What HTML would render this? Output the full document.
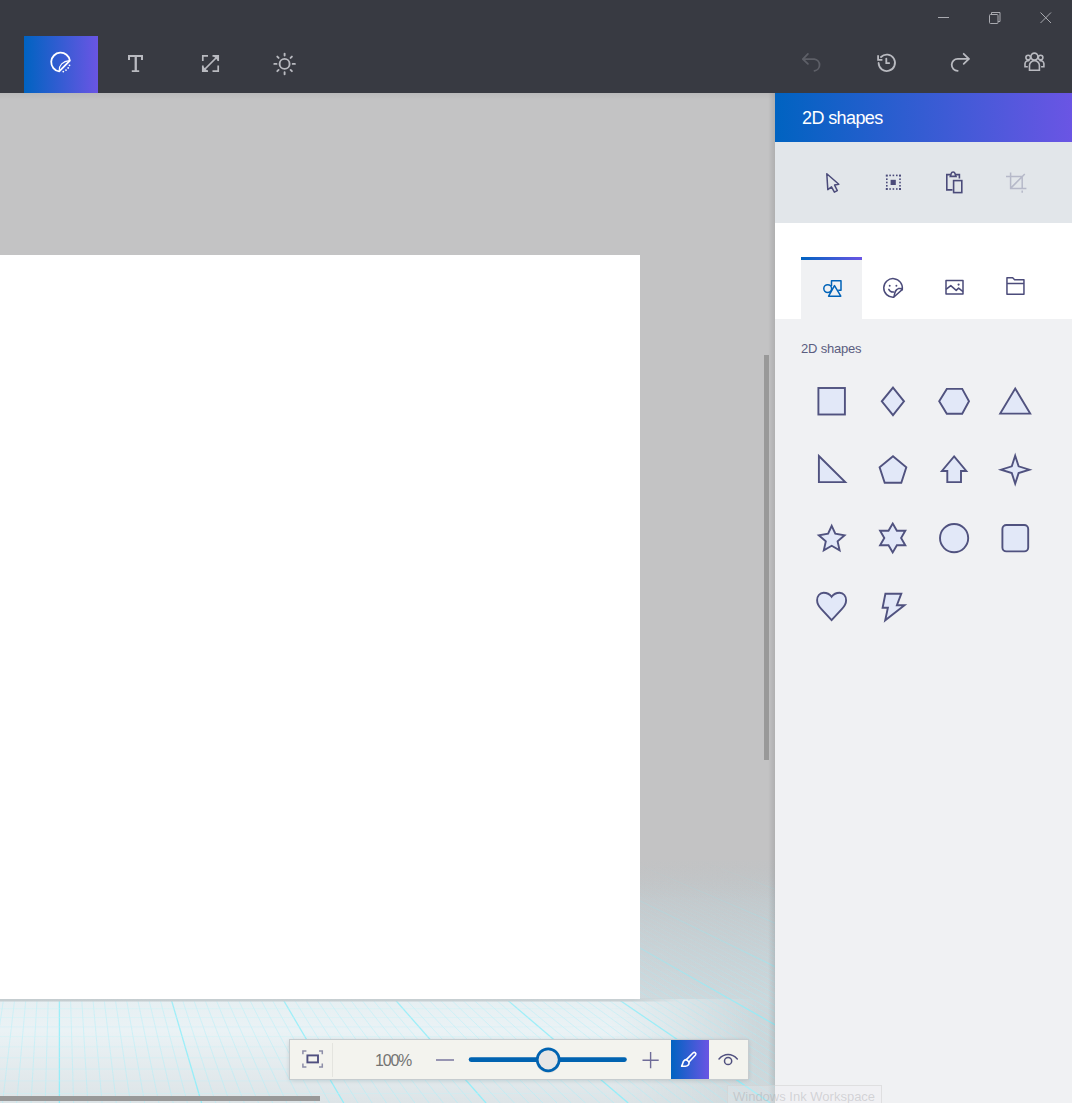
<!DOCTYPE html>
<html><head><meta charset="utf-8">
<style>
*{margin:0;padding:0;box-sizing:border-box}
html,body{width:1072px;height:1103px;overflow:hidden;font-family:"Liberation Sans",sans-serif}
body{position:relative;background:#c3c3c4}
.abs{position:absolute}
#topbar{left:0;top:0;width:1072px;height:93px;background:#383a42}
#activebtn{left:24px;top:36px;width:74px;height:57px;background:linear-gradient(to right,#0063c1,#6a55e4)}
#canvasarea{left:0;top:93px;width:775px;height:1010px;background:#c3c3c4;overflow:hidden}
#paper{left:0;top:255px;width:640px;height:744px;background:#fff}
#panel{left:775px;top:93px;width:297px;height:1010px;background:#f0f1f3}
#phead{left:0;top:0;width:297px;height:49px;background:linear-gradient(to right,#0063c1,#6a55e4)}
#phead span{position:absolute;left:27px;top:14.5px;color:#fff;font-size:18px;letter-spacing:-0.6px;line-height:20px}
#prow{left:0;top:49px;width:297px;height:81px;background:#e2e6ea}
#ptabs{left:0;top:130px;width:297px;height:96px;background:#fff}
#tabsel{left:26px;top:164px;width:61px;height:62px;background:#f0f1f3}
#tabline{left:26px;top:164px;width:61px;height:3px;background:linear-gradient(to right,#0063c1,#6a55e4)}
#lbl{left:801px;top:341px;color:#5b5d80;font-size:13px;letter-spacing:-0.2px;line-height:16px}
#vscroll{left:764px;top:355px;width:5px;height:405px;background:#999}
#hscroll{left:0;top:1096px;width:320px;height:5px;background:#999}
#zoombar{left:290px;top:1040px;width:458px;height:39px;background:#f3f3ee;box-shadow:0 0 0 1px #c6cccf,0 1px 5px rgba(0,0,0,.16)}
#brushbtn{left:671px;top:1040px;width:38px;height:39px;background:linear-gradient(to right,#0063c1,#6a55e4)}
#sep{left:332px;top:1043px;width:1px;height:34px;background:#e4e4df}
#pct{left:375px;top:1052px;color:#737373;font-size:16px;letter-spacing:-1.2px;line-height:18px}
#tooltip{left:727px;top:1085px;width:155px;height:30px;border:1px solid rgba(205,205,205,.5);background:rgba(240,241,243,.25)}
#tooltip span{position:absolute;left:5px;top:3px;font-size:13px;color:rgba(160,160,165,.38);white-space:nowrap;line-height:15px}
#pshadow{left:768px;top:93px;width:7px;height:1010px;background:linear-gradient(to right,rgba(0,0,0,0),rgba(0,0,0,.1))}
</style></head><body>
<div id="topbar" class="abs"></div>
<div id="activebtn" class="abs"></div>
<div id="canvasarea" class="abs">
<svg width="775" height="1010" style="position:absolute;left:0;top:0">
<defs>
<linearGradient id="floorbg" x1="0" y1="0" x2="0" y2="1">
<stop offset="0" stop-color="#c2c3c5" stop-opacity="0"/>
<stop offset="0.165" stop-color="#c5cacd" stop-opacity="1"/>
<stop offset="0.41" stop-color="#cdd6da"/>
<stop offset="0.57" stop-color="#d3dde1"/>
<stop offset="1" stop-color="#d6dfe2"/>
</linearGradient>
<linearGradient id="lightv" x1="0" y1="0" x2="0" y2="1">
<stop offset="0" stop-color="#e6eff2"/>
<stop offset="0.3" stop-color="#eaf2f5"/>
<stop offset="1" stop-color="#dde4e7"/>
</linearGradient>
<linearGradient id="lighth" x1="0" y1="0" x2="1" y2="0">
<stop offset="0" stop-color="#fff"/>
<stop offset="0.8" stop-color="#fff"/>
<stop offset="1" stop-color="#fff" stop-opacity="0"/>
</linearGradient>
<linearGradient id="hfade" x1="0" y1="0" x2="1" y2="0"><stop offset="0" stop-color="#fff"/><stop offset="0.65" stop-color="#fff"/><stop offset="0.9" stop-color="#fff" stop-opacity="0"/></linearGradient>
<mask id="hmask"><rect x="0" y="900" width="775" height="110" fill="url(#hfade)"/></mask>
<mask id="lmask"><rect x="0" y="906" width="760" height="104" fill="url(#lighth)"/></mask>
<radialGradient id="rdark" cx="775" cy="950" r="260" gradientUnits="userSpaceOnUse">
<stop offset="0" stop-color="#b9c3c7" stop-opacity="0.3"/>
<stop offset="1" stop-color="#b9c3c7" stop-opacity="0"/>
</radialGradient>
<linearGradient id="fade" x1="0" y1="0" x2="0" y2="1">
<stop offset="0" stop-color="#fff" stop-opacity="0"/>
<stop offset="0.35" stop-color="#fff" stop-opacity="0.35"/>
<stop offset="0.6" stop-color="#fff" stop-opacity="0.85"/>
<stop offset="1" stop-color="#fff" stop-opacity="1"/>
</linearGradient>
<mask id="fmask"><rect x="0" y="767" width="775" height="243" fill="url(#fade)"/></mask>
<linearGradient id="shline" x1="0" y1="0" x2="1" y2="0">
<stop offset="0" stop-color="#c5cdd0"/><stop offset="0.93" stop-color="#c8d0d3"/><stop offset="1" stop-color="#c8d0d3" stop-opacity="0"/>
</linearGradient>
<style>
.f{stroke:#a6f0fa;stroke-width:1;stroke-opacity:.45}
.b{stroke:#8eeefa;stroke-width:1.3;stroke-opacity:.95}
.h{stroke:#bff3fa;stroke-width:1;stroke-opacity:.35}
</style>
</defs>
<rect x="0" y="767" width="775" height="243" fill="url(#floorbg)"/>
<rect x="0" y="767" width="775" height="243" fill="url(#rdark)"/>
<rect x="0" y="906" width="760" height="104" fill="url(#lightv)" mask="url(#lmask)"/>
<g mask="url(#fmask)">
<line class="f" x1="2.6" y1="767.0" x2="-54.4" y2="1010.0"/>
<line class="f" x1="9.7" y1="767.0" x2="-40.1" y2="1010.0"/>
<line class="f" x1="16.8" y1="767.0" x2="-25.9" y2="1010.0"/>
<line class="f" x1="23.9" y1="767.0" x2="-11.7" y2="1010.0"/>
<line class="f" x1="31.0" y1="767.0" x2="2.5" y2="1010.0"/>
<line class="f" x1="38.1" y1="767.0" x2="16.7" y2="1010.0"/>
<line class="f" x1="45.2" y1="767.0" x2="31.0" y2="1010.0"/>
<line class="f" x1="52.3" y1="767.0" x2="45.2" y2="1010.0"/>
<line class="b" x1="59.4" y1="767.0" x2="59.4" y2="1010.0"/>
<line class="f" x1="66.5" y1="767.0" x2="73.6" y2="1010.0"/>
<line class="f" x1="73.6" y1="767.0" x2="87.8" y2="1010.0"/>
<line class="f" x1="80.7" y1="767.0" x2="102.1" y2="1010.0"/>
<line class="f" x1="87.8" y1="767.0" x2="116.3" y2="1010.0"/>
<line class="f" x1="94.9" y1="767.0" x2="130.5" y2="1010.0"/>
<line class="f" x1="102.0" y1="767.0" x2="144.7" y2="1010.0"/>
<line class="f" x1="109.1" y1="767.0" x2="158.9" y2="1010.0"/>
<line class="f" x1="116.2" y1="767.0" x2="173.2" y2="1010.0"/>
<line class="f" x1="123.3" y1="767.0" x2="187.4" y2="1010.0"/>
<line class="b" x1="130.4" y1="767.0" x2="201.6" y2="1010.0"/>
<line class="f" x1="137.4" y1="767.0" x2="215.8" y2="1010.0"/>
<line class="f" x1="144.5" y1="767.0" x2="230.0" y2="1010.0"/>
<line class="f" x1="151.6" y1="767.0" x2="244.3" y2="1010.0"/>
<line class="f" x1="158.7" y1="767.0" x2="258.5" y2="1010.0"/>
<line class="f" x1="165.8" y1="767.0" x2="272.7" y2="1010.0"/>
<line class="f" x1="172.9" y1="767.0" x2="286.9" y2="1010.0"/>
<line class="f" x1="180.0" y1="767.0" x2="301.1" y2="1010.0"/>
<line class="f" x1="187.1" y1="767.0" x2="315.4" y2="1010.0"/>
<line class="f" x1="194.2" y1="767.0" x2="329.6" y2="1010.0"/>
<line class="b" x1="201.3" y1="767.0" x2="343.8" y2="1010.0"/>
<line class="f" x1="208.4" y1="767.0" x2="358.0" y2="1010.0"/>
<line class="f" x1="215.5" y1="767.0" x2="372.2" y2="1010.0"/>
<line class="f" x1="222.6" y1="767.0" x2="386.5" y2="1010.0"/>
<line class="f" x1="229.7" y1="767.0" x2="400.7" y2="1010.0"/>
<line class="f" x1="236.8" y1="767.0" x2="414.9" y2="1010.0"/>
<line class="f" x1="243.9" y1="767.0" x2="429.1" y2="1010.0"/>
<line class="f" x1="251.0" y1="767.0" x2="443.3" y2="1010.0"/>
<line class="f" x1="258.1" y1="767.0" x2="457.6" y2="1010.0"/>
<line class="f" x1="265.2" y1="767.0" x2="471.8" y2="1010.0"/>
<line class="b" x1="272.3" y1="767.0" x2="486.0" y2="1010.0"/>
<line class="f" x1="279.4" y1="767.0" x2="500.2" y2="1010.0"/>
<line class="f" x1="286.4" y1="767.0" x2="514.4" y2="1010.0"/>
<line class="f" x1="293.5" y1="767.0" x2="528.7" y2="1010.0"/>
<line class="f" x1="300.6" y1="767.0" x2="542.9" y2="1010.0"/>
<line class="f" x1="307.7" y1="767.0" x2="557.1" y2="1010.0"/>
<line class="f" x1="314.8" y1="767.0" x2="571.3" y2="1010.0"/>
<line class="f" x1="321.9" y1="767.0" x2="585.5" y2="1010.0"/>
<line class="f" x1="329.0" y1="767.0" x2="599.8" y2="1010.0"/>
<line class="f" x1="336.1" y1="767.0" x2="614.0" y2="1010.0"/>
<line class="b" x1="343.2" y1="767.0" x2="628.2" y2="1010.0"/>
<line class="f" x1="350.3" y1="767.0" x2="642.4" y2="1010.0"/>
<line class="f" x1="357.4" y1="767.0" x2="656.6" y2="1010.0"/>
<line class="f" x1="364.5" y1="767.0" x2="670.9" y2="1010.0"/>
<line class="f" x1="371.6" y1="767.0" x2="685.1" y2="1010.0"/>
<line class="f" x1="378.7" y1="767.0" x2="699.3" y2="1010.0"/>
<line class="f" x1="385.8" y1="767.0" x2="713.5" y2="1010.0"/>
<line class="f" x1="392.9" y1="767.0" x2="727.7" y2="1010.0"/>
<line class="f" x1="400.0" y1="767.0" x2="742.0" y2="1010.0"/>
<line class="f" x1="407.1" y1="767.0" x2="756.2" y2="1010.0"/>
<line class="b" x1="414.2" y1="767.0" x2="770.4" y2="1010.0"/>
<line class="f" x1="421.3" y1="767.0" x2="784.6" y2="1010.0"/>
<line class="f" x1="428.4" y1="767.0" x2="798.8" y2="1010.0"/>
<line class="f" x1="435.5" y1="767.0" x2="813.1" y2="1010.0"/>
<line class="f" x1="442.5" y1="767.0" x2="827.3" y2="1010.0"/>
<line class="f" x1="449.6" y1="767.0" x2="841.5" y2="1010.0"/>
<line class="f" x1="456.7" y1="767.0" x2="855.7" y2="1010.0"/>
<line class="f" x1="463.8" y1="767.0" x2="869.9" y2="1010.0"/>
<line class="f" x1="470.9" y1="767.0" x2="884.2" y2="1010.0"/>
<line class="f" x1="478.0" y1="767.0" x2="898.4" y2="1010.0"/>
<line class="b" x1="485.1" y1="767.0" x2="912.6" y2="1010.0"/>
<line class="f" x1="492.2" y1="767.0" x2="926.8" y2="1010.0"/>
<line class="f" x1="499.3" y1="767.0" x2="941.0" y2="1010.0"/>
<line class="f" x1="506.4" y1="767.0" x2="955.3" y2="1010.0"/>
<line class="f" x1="513.5" y1="767.0" x2="969.5" y2="1010.0"/>
<line class="f" x1="520.6" y1="767.0" x2="983.7" y2="1010.0"/>
<line class="f" x1="527.7" y1="767.0" x2="997.9" y2="1010.0"/>
<line class="f" x1="534.8" y1="767.0" x2="1012.1" y2="1010.0"/>
<line class="f" x1="541.9" y1="767.0" x2="1026.4" y2="1010.0"/>
<line class="f" x1="549.0" y1="767.0" x2="1040.6" y2="1010.0"/>
<line class="b" x1="556.1" y1="767.0" x2="1054.8" y2="1010.0"/>
<line class="f" x1="563.2" y1="767.0" x2="1069.0" y2="1010.0"/>
<line class="f" x1="570.3" y1="767.0" x2="1083.2" y2="1010.0"/>
<line class="f" x1="577.4" y1="767.0" x2="1097.5" y2="1010.0"/>
<line class="f" x1="584.5" y1="767.0" x2="1111.7" y2="1010.0"/>
<line class="f" x1="591.5" y1="767.0" x2="1125.9" y2="1010.0"/>
<line class="f" x1="598.6" y1="767.0" x2="1140.1" y2="1010.0"/>
<line class="f" x1="605.7" y1="767.0" x2="1154.3" y2="1010.0"/>
<line class="f" x1="612.8" y1="767.0" x2="1168.6" y2="1010.0"/>
<line class="f" x1="619.9" y1="767.0" x2="1182.8" y2="1010.0"/>
<line class="b" x1="627.0" y1="767.0" x2="1197.0" y2="1010.0"/>
<line class="f" x1="634.1" y1="767.0" x2="1211.2" y2="1010.0"/>
<line class="f" x1="641.2" y1="767.0" x2="1225.4" y2="1010.0"/>
<line class="f" x1="648.3" y1="767.0" x2="1239.7" y2="1010.0"/>
<line class="f" x1="655.4" y1="767.0" x2="1253.9" y2="1010.0"/>
<line class="f" x1="662.5" y1="767.0" x2="1268.1" y2="1010.0"/>
<line class="f" x1="669.6" y1="767.0" x2="1282.3" y2="1010.0"/>
<line class="f" x1="676.7" y1="767.0" x2="1296.5" y2="1010.0"/>
<line class="f" x1="683.8" y1="767.0" x2="1310.8" y2="1010.0"/>
<line class="f" x1="690.9" y1="767.0" x2="1325.0" y2="1010.0"/>
<line class="b" x1="698.0" y1="767.0" x2="1339.2" y2="1010.0"/>
<line class="f" x1="705.1" y1="767.0" x2="1353.4" y2="1010.0"/>
<line class="f" x1="712.2" y1="767.0" x2="1367.6" y2="1010.0"/>
<line class="f" x1="719.3" y1="767.0" x2="1381.9" y2="1010.0"/>
<line class="f" x1="726.4" y1="767.0" x2="1396.1" y2="1010.0"/>
<line class="f" x1="733.5" y1="767.0" x2="1410.3" y2="1010.0"/>
<line class="f" x1="740.5" y1="767.0" x2="1424.5" y2="1010.0"/>
<line class="f" x1="747.6" y1="767.0" x2="1438.7" y2="1010.0"/>
<line class="f" x1="754.7" y1="767.0" x2="1452.9" y2="1010.0"/>
<line class="f" x1="761.8" y1="767.0" x2="1467.2" y2="1010.0"/>
<line class="b" x1="768.9" y1="767.0" x2="1481.4" y2="1010.0"/>
<g style="mask:url(#hmask)">
<line class="h" x1="0" y1="915.6" x2="775" y2="915.6"/>
<line class="h" x1="0" y1="924.5" x2="775" y2="924.5"/>
<line class="h" x1="0" y1="933.9" x2="775" y2="933.9"/>
<line class="h" x1="0" y1="943.6" x2="775" y2="943.6"/>
<line class="h" x1="0" y1="953.9" x2="775" y2="953.9"/>
<line class="h" x1="0" y1="964.7" x2="775" y2="964.7"/>
<line class="h" x1="0" y1="976.0" x2="775" y2="976.0"/>
<line class="h" x1="0" y1="987.9" x2="775" y2="987.9"/>
<line class="h" x1="0" y1="1000.5" x2="775" y2="1000.5"/>
</g>
</g>
<rect x="0" y="905.5" width="680" height="3" fill="url(#shline)"/>
</svg>
</div>
<div id="paper" class="abs"></div>
<div class="abs" style="left:0;top:93px;width:775px;height:7px;background:linear-gradient(to bottom,rgba(0,0,0,.05),rgba(0,0,0,0))"></div>
<div id="pshadow" class="abs"></div>
<div id="vscroll" class="abs"></div>
<div id="hscroll" class="abs"></div>
<div id="panel" class="abs">
  <div id="phead" class="abs"><span>2D shapes</span></div>
  <div id="prow" class="abs"></div>
  <div id="ptabs" class="abs"></div>
  <div id="tabsel" class="abs"></div>
  <div id="tabline" class="abs"></div>
</div>
<div id="lbl" class="abs">2D shapes</div>
<div id="zoombar" class="abs"></div>
<div id="sep" class="abs"></div>
<div id="brushbtn" class="abs"></div>
<div id="pct" class="abs">100%</div>
<div id="tooltip" class="abs"><span>Windows Ink Workspace</span></div>
<!--ICONS--><svg class="abs" style="left:0;top:0" width="1072" height="1103" viewBox="0 0 1072 1103">
<!-- window controls -->
<g stroke="#a9aab0" stroke-width="1" fill="none">
<line x1="938" y1="17.5" x2="949" y2="17.5"/>
<rect x="989.5" y="14.5" width="8.5" height="9" rx="1"/>
<path d="M991.5 14.5 V12.5 H1000 V21.5 H998"/>
<path d="M1040.5 12.5 L1051 23 M1051 12.5 L1040.5 23"/>
</g>
<!-- active tool icon (white) -->
<g stroke="#fff" stroke-width="1.8" fill="none" stroke-linecap="round" stroke-linejoin="round">
<path d="M69.9 60.6 A9.4 9.4 0 1 0 59.2 71.4 L69.9 60.6"/>
<path d="M59.2 70.4 C59 65.5 62.6 61.2 69.4 60.6" stroke-width="1.1"/>
</g>
<g fill="#fff">
<circle cx="63.3" cy="71.6" r="0.9"/><circle cx="66" cy="70.1" r="0.9"/><circle cx="68.2" cy="67.9" r="0.9"/><circle cx="69.5" cy="65.3" r="0.9"/>
</g>
<!-- T -->
<g fill="#b9bac0">
<path d="M128 55 H143 V60 H141 V57.1 H136.9 V70.2 H139.2 V72 H131.8 V70.2 H134.6 V57.1 H130 V60 H128 Z"/>
</g>
<!-- resize -->
<g stroke="#b9bac0" stroke-width="1.7" fill="none">
<path d="M202.8 61 V55.8 H208"/>
<path d="M212.5 55.8 H218.2 V61"/>
<path d="M202.8 65.5 V71.2 H208"/>
<path d="M212.5 71.2 H218.2 V65.5"/>
<path d="M204 70 L217 57"/>
</g>
<g fill="#b9bac0">
<path d="M218.6 55.4 L218.6 61.2 L212.8 55.4 Z"/>
<path d="M202.4 71.6 L202.4 65.8 L208.2 71.6 Z"/>
</g>
<!-- sun -->
<g stroke="#b9bac0" stroke-width="1.9" fill="none" stroke-linecap="round">
<circle cx="284.6" cy="63.9" r="5"/>
<path d="M284.6 53.6 V55.6 M284.6 72.2 V74.2 M274.3 63.9 H276.5 M292.7 63.9 H294.9 M277.3 56.6 L278.6 57.9 M290.6 69.9 L291.9 71.2 M277.3 71.2 L278.6 69.9 M290.6 57.9 L291.9 56.6"/>
</g>
<!-- undo (dim) -->
<g stroke="#5d5f67" stroke-width="1.8" fill="none" stroke-linecap="round" stroke-linejoin="round">
<path d="M807.9 53.9 L802.9 59.1 L807.9 63.9"/>
<path d="M803.2 59.1 H814.3 A5.9 5.9 0 0 1 814.5 70.8"/>
</g>
<!-- history -->
<g stroke="#b9bac0" stroke-width="1.8" fill="none" stroke-linecap="round">
<path d="M878.6 63 A8.2 8.2 0 1 0 881 57"/>
<path d="M886.3 58.6 V63.1 H889.2"/>
</g>
<path d="M878.1 55.2 V59.9 H882.4" fill="none" stroke="#b9bac0" stroke-width="1.8"/>
<!-- redo -->
<g stroke="#b9bac0" stroke-width="1.8" fill="none" stroke-linecap="round" stroke-linejoin="round">
<path d="M963.7 53.8 L968.9 58.8 L963.7 63.9"/>
<path d="M968.6 58.8 H957.7 A6 6 0 0 0 957.7 70.8"/>
</g>
<!-- people -->
<g stroke="#b9bac0" stroke-width="1.6" fill="none">
<circle cx="1034.4" cy="56.6" r="3.5"/>
<path d="M1029.5 70.2 V65.6 A4.9 4.9 0 0 1 1039.4 65.6 V70.2 Z"/>
<circle cx="1028.2" cy="57.5" r="2.3"/>
<circle cx="1040.6" cy="57.5" r="2.3"/>
<path d="M1027.8 66.8 H1025 V63.6 A3.4 3.4 0 0 1 1029.5 60.8"/>
<path d="M1041.1 66.8 H1043.9 V63.6 A3.4 3.4 0 0 0 1039.4 60.8"/>
</g>
<!-- panel row icons -->
<g stroke="#4b4b7a" stroke-width="1.5" fill="none" stroke-linejoin="round">
<path d="M826.8 173.8 L838.8 184.3 L834.6 185.1 L837.3 190.6 L834.4 192.2 L831.5 186.9 L827.8 189.6 Z"/>
</g>
<g fill="#4b4b7a">
<rect x="885.8" y="174.6" width="2" height="2"/><rect x="889.3" y="174.6" width="1.6" height="1.6"/><rect x="892.6" y="174.6" width="1.6" height="1.6"/><rect x="896" y="174.6" width="1.6" height="1.6"/><rect x="899" y="174.6" width="2" height="2"/>
<rect x="885.8" y="188" width="2" height="2"/><rect x="889.3" y="188.2" width="1.6" height="1.6"/><rect x="892.6" y="188.2" width="1.6" height="1.6"/><rect x="896" y="188.2" width="1.6" height="1.6"/><rect x="899" y="188" width="2" height="2"/>
<rect x="886" y="178.4" width="1.6" height="1.6"/><rect x="886" y="181.7" width="1.6" height="1.6"/><rect x="886" y="185" width="1.6" height="1.6"/>
<rect x="899.2" y="178.4" width="1.6" height="1.6"/><rect x="899.2" y="181.7" width="1.6" height="1.6"/><rect x="899.2" y="185" width="1.6" height="1.6"/>
<rect x="890.6" y="179.8" width="5.2" height="5.2"/>
</g>
<g stroke="#4b4b7a" stroke-width="1.6" fill="none">
<path d="M952.5 189.9 H946.8 V174.6 H950.3 M956 174.6 H959.4 V178.6"/>
<path d="M950.3 176.4 L951.2 173.4 A2 2 0 0 1 955 173.4 L956 176.4 Z"/>
<rect x="953.6" y="180.6" width="8.2" height="12"/>
</g>
<g stroke="#b6b9c9" stroke-width="1.5" fill="none">
<path d="M1006 176.6 H1022.2 V188.5 M1010.6 172.4 V188.5 H1026.4 M1022.2 190.5 V192.8 M1011 187.9 L1024.8 174"/>
</g>
<!-- tab icons -->
<g stroke="#0063b8" stroke-width="1.5" fill="none" stroke-linejoin="round">
<circle cx="827.7" cy="288.6" r="3.9"/>
<path d="M831.5 286 V280.7 H841 V290.2 H838.2"/>
<path d="M834.5 285.6 L840.8 296.2 H828.6 Z"/>
</g>
<g stroke="#4b4b7a" stroke-width="1.5" fill="none" stroke-linecap="round">
<path d="M902.2 289.6 A9.3 9.3 0 1 0 893.6 297.2 Z"/>
<path d="M894 296.5 C895 292 895.2 289.7 898.4 288.6 C900 288.2 901.6 288.6 902.4 289.6"/>
<path d="M888.8 289.4 C889.8 291.6 891.6 292.2 893.7 292"/>
</g>
<g fill="#4b4b7a"><circle cx="889.7" cy="285.7" r="0.95"/><circle cx="896.4" cy="285.7" r="0.95"/></g>
<g stroke="#4b4b7a" stroke-width="1.5" fill="none" stroke-linejoin="round">
<rect x="946" y="280.5" width="17" height="13.6"/>
<path d="M946 289.4 L950.8 285.6 L956.2 290.4 L958.6 288.1 L963 291.6"/>
<path d="M1006.95 294.15 V277.85 H1012.7 L1014.6 279.85 H1023.95 V294.15 Z M1006.95 283.6 H1023.95"/>
</g>
<circle cx="958.6" cy="284.6" r="1.1" fill="#4b4b7a"/>
<!-- shapes grid -->
<g stroke="#50527f" stroke-width="1.9" fill="#e2e8f8" stroke-linejoin="miter">
<rect x="818.4" y="388" width="26.5" height="26.5"/>
<path d="M893 387.6 L904 401.3 L893 415.2 L881.8 401.3 Z"/>
<path d="M939.2 401.3 L946.8 388.9 H962.2 L969 401.3 L962.2 413.7 H946.8 Z"/>
<path d="M1015.2 388.6 L1030.2 413.6 H1000.2 Z"/>
<path d="M818.9 456 L845.2 482.1 H818.9 Z"/>
<path d="M893 456.3 L906.3 467.3 L901.3 482.7 H884.7 L879.6 467.3 Z"/>
<path d="M954.1 456.4 L966.3 471 H961 V482.1 H947.3 V471 H941.9 Z"/>
<path d="M1015.2 455.7 L1018.6 466.3 L1029.4 469.7 L1018.6 473.1 L1015.2 483.7 L1011.8 473.1 L1001 469.7 L1011.8 466.3 Z"/>
<path d="M831.7 525.8 L835.3 533.6 L844.6 535.3 L837.6 541.4 L839.6 550.4 L831.7 545.8 L823.8 550.4 L825.8 541.4 L818.8 535.3 L828.1 533.6 Z"/>
<path d="M892.7 523.6 L896.9 530.8 H905.3 L901.1 538 L905.3 545.2 H896.9 L892.7 552.4 L888.5 545.2 H880.1 L884.3 538 L880.1 530.8 H888.5 Z"/>
<circle cx="954.1" cy="538.1" r="14.1"/>
<rect x="1002.4" y="525" width="25.8" height="26.4" rx="4"/>
<path d="M831.6 596.8 C829.4 593.8 826.5 592.8 823.6 592.8 C819.6 592.8 817.1 596.2 817.1 600.2 C817.1 603.8 818.8 606.3 821.2 608.8 L831.6 620.2 L842 608.8 C844.4 606.3 846.1 603.8 846.1 600.2 C846.1 596.2 843.6 592.8 839.6 592.8 C836.7 592.8 833.8 593.8 831.6 596.8 Z"/>
<path d="M885.4 593.7 H901.3 L896.9 605.2 H904.5 L885.2 620.3 L887.9 607.8 H882.6 Z"/>
</g>
<!-- zoom bar icons -->
<g stroke="#8d8ea8" stroke-width="1.5" fill="none">
<path d="M302.9 1054.2 V1050.9 H306.4 M319 1050.9 H322.3 V1054.2 M302.9 1063.4 V1066.9 H306.4 M319 1066.9 H322.3 V1063.4"/>
</g>
<rect x="307.4" y="1055.4" width="10.6" height="7" stroke="#4f4f7f" stroke-width="1.9" fill="none"/>
<line x1="436" y1="1060" x2="454" y2="1060" stroke="#6f6c98" stroke-width="1.4"/>
<line x1="471" y1="1059.6" x2="624.5" y2="1059.6" stroke="#0063b1" stroke-width="4.6" stroke-linecap="round"/>
<circle cx="548.2" cy="1061" r="12" fill="rgba(0,0,0,.08)"/>
<circle cx="548.2" cy="1059.8" r="11" fill="#e6e6e6" stroke="#0063b1" stroke-width="2.7"/>
<path d="M642.5 1060.2 H658.7 M650.6 1052 V1068.2" stroke="#6f6c98" stroke-width="1.4" fill="none"/>
<g stroke="#fff" stroke-width="1.6" fill="none" stroke-linejoin="round" stroke-linecap="round">
<path d="M689 1062 L695.5 1055 A1.6 1.6 0 0 0 693.2 1052.8 L686.4 1059.6"/>
<path d="M686.4 1059.6 C683.5 1059.6 683 1062.2 682.6 1063.8 C682.3 1065 681.6 1066.2 681.6 1066.2 H685.4 C687.8 1066.2 689.5 1064.5 689 1062 Z"/>
</g>
<g stroke="#50507f" stroke-width="1.5" fill="none" stroke-linecap="round">
<path d="M719 1058.9 C724.5 1053 731.7 1053 737.3 1058.9"/>
<circle cx="728.1" cy="1061" r="3.6"/>
</g>
</svg>

</body></html>
